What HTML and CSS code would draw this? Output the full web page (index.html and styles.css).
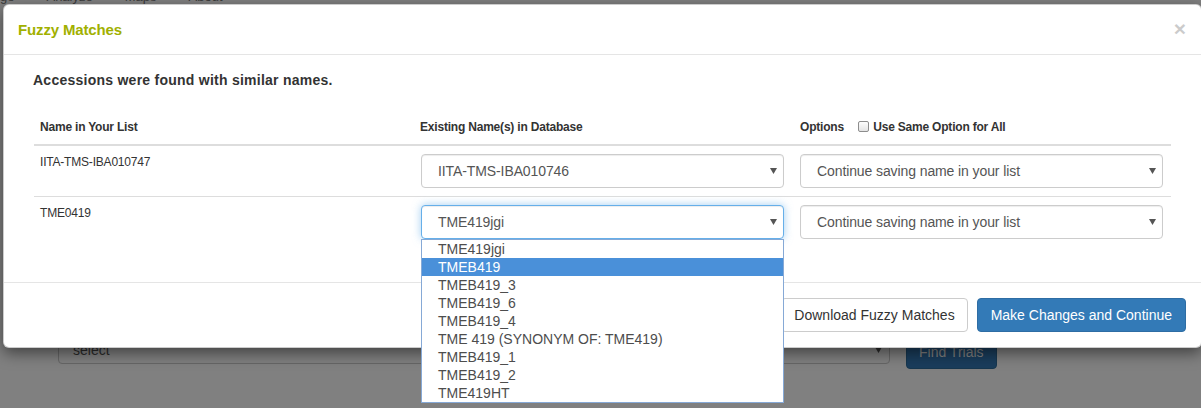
FILE: index.html
```html
<!DOCTYPE html>
<html>
<head>
<meta charset="utf-8">
<title>Fuzzy Matches</title>
<link rel="stylesheet" href="styles.css">
</head>
<body>
<div class="page">
  <nav class="topnav"><span>ge</span><span>Analyze</span><span>Maps</span><span>About</span></nav>
  <div class="search-row">
    <div class="bg-select"><span>select</span><svg class="caret" width="7" height="6" viewBox="0 0 7 6"><path d="M0 0H7L3.5 6Z" fill="#2b2b2b"/></svg></div>
    <div class="bg-btn">Find Trials</div>
  </div>
</div>

<div class="modal">
  <div class="modal-header">
    <h4 class="modal-title">Fuzzy Matches</h4>
    <span class="close">×</span>
  </div>
  <div class="modal-body">
    <div class="inner">
      <p class="lead">Accessions were found with similar names.</p>
      <table class="matches">
        <thead>
          <tr>
            <th>Name in Your List</th>
            <th>Existing Name(s) in Database</th>
            <th>Options <span class="check"></span> Use Same Option for All</th>
          </tr>
        </thead>
        <tbody>
          <tr>
            <td>IITA-TMS-IBA010747</td>
            <td><div class="sel"><span>IITA-TMS-IBA010746</span><svg class="caret" width="7" height="6" viewBox="0 0 7 6"><path d="M0 0H7L3.5 6Z" fill="#555"/></svg></div></td>
            <td><div class="sel"><span>Continue saving name in your list</span><svg class="caret" width="7" height="6" viewBox="0 0 7 6"><path d="M0 0H7L3.5 6Z" fill="#555"/></svg></div></td>
          </tr>
          <tr>
            <td>TME0419</td>
            <td>
              <div class="sel focus"><span>TME419jgi</span><svg class="caret" width="7" height="6" viewBox="0 0 7 6"><path d="M0 0H7L3.5 6Z" fill="#555"/></svg>
                <ul class="dropdown">
                  <li>TME419jgi</li>
                  <li class="hl">TMEB419</li>
                  <li>TMEB419_3</li>
                  <li>TMEB419_6</li>
                  <li>TMEB419_4</li>
                  <li>TME 419 (SYNONYM OF: TME419)</li>
                  <li>TMEB419_1</li>
                  <li>TMEB419_2</li>
                  <li>TME419HT</li>
                </ul>
              </div>
            </td>
            <td><div class="sel"><span>Continue saving name in your list</span><svg class="caret" width="7" height="6" viewBox="0 0 7 6"><path d="M0 0H7L3.5 6Z" fill="#555"/></svg></div></td>
          </tr>
        </tbody>
      </table>
    </div>
  </div>
  <div class="modal-footer">
    <button class="btn">Download Fuzzy Matches</button>
    <button class="btn btn-primary">Make Changes and Continue</button>
  </div>
</div>
</body>
</html>
```

FILE: styles.css
```css
* { box-sizing: border-box; }
html, body { margin: 0; height: 408px; overflow: hidden; }
body {
  background: #808080;
  font-family: "Liberation Sans", Arial, Helvetica, sans-serif;
  color: #333;
  position: relative;
}

/* page behind the backdrop */
.page { display: flex; flex-direction: column; }
.topnav {
  display: flex;
  gap: 32px;
  margin-top: -13px;
  height: 20px;
  line-height: 20px;
  font-size: 13px;
  color: #3b3b3b;
}
.search-row {
  display: flex;
  align-items: flex-start;
  gap: 16px;
  margin-top: 323px;
  padding-left: 58px;
}
.bg-select {
  width: 832px;
  height: 34px;
  border: 1px solid #666;
  border-radius: 4px;
  display: flex;
  align-items: center;
  justify-content: space-between;
  padding: 5px 7px 0 14px;
  font-size: 14px;
  color: #2b2b2b;
}
.bg-btn {
  margin-top: 5px;
  height: 34px;
  padding: 6px 12px;
  background: #1a3d5c;
  border: 1px solid #17374f;
  border-radius: 4px;
  color: #808080;
  font-size: 14px;
  line-height: 20px;
}

/* modal */
.modal {
  position: absolute;
  left: 3px;
  top: 4px;
  width: 1199px;
  background: #fff;
  border: 1px solid rgba(0,0,0,.2);
  border-radius: 6px;
  box-shadow: 0 5px 15px rgba(0,0,0,.5);
}
.modal-header {
  display: flex;
  justify-content: space-between;
  align-items: flex-start;
  padding: 15px 15px 15px 14px;
  border-bottom: 1px solid #e5e5e5;
}
.modal-title {
  margin: 0;
  font-size: 15px;
  line-height: 19px;
  font-weight: bold;
  letter-spacing: -0.15px;
  color: #a1b000;
}
.close {
  font-size: 21px;
  font-weight: bold;
  line-height: 1;
  color: #000;
  opacity: .2;
  text-shadow: 0 1px 0 #fff;
  margin-top: -2px;
}
.modal-body { padding: 15px; }
.inner { padding: 0 15px; }
.lead {
  margin: 0 0 21px -1px;
  font-size: 14px;
  font-weight: bold;
  line-height: 20px;
  letter-spacing: 0.25px;
  color: #333;
}

.matches {
  width: 100%;
  table-layout: fixed;
  border-collapse: collapse;
  margin-bottom: 20px;
  font-size: 12px;
  letter-spacing: -0.2px;
}
.matches th, .matches td {
  padding: 8px;
  line-height: 17px;
  text-align: left;
  vertical-align: top;
}
.matches th:first-child, .matches td:first-child { padding-left: 6px; }
.matches th {
  border-bottom: 2px solid #ddd;
  font-weight: bold;
  vertical-align: bottom;
}
.matches th:nth-child(2) { padding-left: 7px; }
.matches td { border-top: 1px solid #ddd; }

.check {
  display: inline-block;
  width: 11px;
  height: 11px;
  margin: 0 1px 0 11px;
  border: 1px solid #8d8d8d;
  border-radius: 2px;
  background: linear-gradient(#fdfdfd, #e4e4e4);
  vertical-align: -1px;
}

.sel {
  position: relative;
  height: 34px;
  border: 1px solid #ccc;
  border-radius: 4px;
  display: flex;
  align-items: center;
  justify-content: space-between;
  padding: 0 6px 0 16px;
  font-size: 14px;
  letter-spacing: -0.1px;
  color: #555;
  background: #fff;
  box-shadow: inset 0 1px 1px rgba(0,0,0,.075);
}
.sel.focus {
  border-color: #66afe9;
  box-shadow: inset 0 1px 1px rgba(0,0,0,.075), 0 0 8px rgba(102,175,233,.6);
}

.dropdown {
  position: absolute;
  z-index: 10;
  left: -1px;
  right: -1px;
  top: calc(100% + 1px);
  margin: 0;
  padding: 0;
  list-style: none;
  background: #fff;
  border: 1px solid #86a9d6;
  font-size: 14px;
  letter-spacing: 0;
  color: #4d4d4d;
}
.dropdown li {
  height: 18px;
  line-height: 18px;
  padding-left: 16px;
  white-space: nowrap;
}
.dropdown li.hl { background: #4a90d9; color: #fff; }

.modal-footer {
  display: flex;
  justify-content: flex-end;
  gap: 9px;
  padding: 15px;
  border-top: 1px solid #e5e5e5;
}
.btn {
  font-family: inherit;
  font-size: 14px;
  line-height: 20px;
  height: 34px;
  padding: 6px 12px;
  border: 1px solid #ccc;
  border-radius: 4px;
  background: #fff;
  color: #333;
}
.btn-primary {
  padding: 6px 13px;
  background: #337ab7;
  border-color: #2e6da4;
  color: #fff;
}
```
